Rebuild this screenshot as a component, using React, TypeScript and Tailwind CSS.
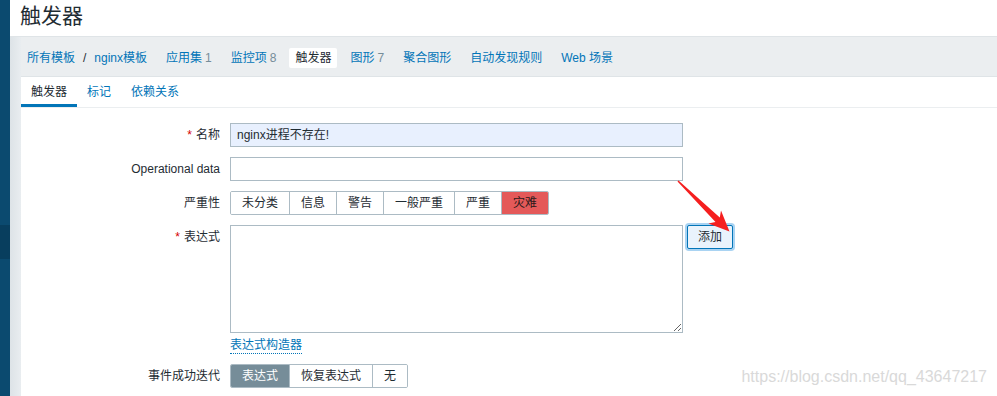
import React from "react";

const FONT = "font-['Liberation_Sans','Noto_Sans_CJK_SC',sans-serif]";

function NavLink({ text, count, active }: { text: string; count?: string; active?: boolean }) {
  return (
    <span
      className={
        "px-[6px] h-[20px] flex items-center whitespace-nowrap " +
        (active ? "bg-white text-[#1f2c33] rounded-[2px]" : "text-[#0275b8]")
      }
    >
      {text}
      {count && <span className="text-[#768d99] ml-[3px]">{count}</span>}
    </span>
  );
}

function Label({ text, req }: { text: string; req?: boolean }) {
  return (
    <div className="w-[209px] shrink-0 pr-[10px] text-right leading-[24px] text-[#1f2c33]">
      {req && <span className="text-[#d40000] mr-[4px]">*</span>}
      {text}
    </div>
  );
}

function Seg({
  items,
  selected,
  selClass,
}: {
  items: string[];
  selected: number;
  selClass: string;
}) {
  return (
    <div className="flex h-[24px] border border-[#acbbc4] rounded-[2px] overflow-hidden">
      {items.map((t, i) => (
        <span
          key={t}
          className={
            "px-[11px] flex items-center whitespace-nowrap " +
            (i > 0 ? "border-l border-[#acbbc4] " : "") +
            (i === selected ? selClass : "bg-white text-[#1f2c33]")
          }
        >
          {t}
        </span>
      ))}
    </div>
  );
}

export default function App() {
  return (
    <div className={"relative w-[997px] h-[396px] overflow-hidden flex text-[12px] " + FONT}>
      {/* sidebar */}
      <div className="w-[10px] shrink-0 flex flex-col bg-[#0b4a6f]">
        <div className="h-[225px] bg-[#0b4a6f]" />
        <div className="h-[34px] bg-[#083e5e]" />
        <div className="flex-1 bg-[#0b4a6f]" />
      </div>
      {/* main */}
      <div className="flex-1 flex flex-col min-w-0">
        <div className="h-[37px] shrink-0 bg-white border-b border-[#dfe4e7] pl-[10px] pt-[4px]">
          <div className="text-[21px] leading-[24px] text-[#1f2c33]">触发器</div>
        </div>
        <div className="flex-1 flex bg-[#ebeef0]">
          <div className="w-[11px] shrink-0 bg-gradient-to-r from-[#dde3e7] to-[#e9edf0]" />
          <div className="flex-1 flex flex-col min-w-0">
            {/* nav */}
            <div className="h-[40px] shrink-0 flex items-center pt-[3px] gap-[7px] border-b border-[#dfe4e7]">
              <div className="flex items-center">
                <NavLink text="所有模板" />
                <span className="text-[#1f2c33] px-[2px]">/</span>
                <NavLink text="nginx模板" />
              </div>
              <NavLink text="应用集" count="1" />
              <NavLink text="监控项" count="8" />
              <NavLink text="触发器" active />
              <NavLink text="图形" count="7" />
              <NavLink text="聚合图形" />
              <NavLink text="自动发现规则" />
              <NavLink text="Web 场景" />
            </div>
            {/* card */}
            <div className="flex-1 bg-white flex flex-col">
              <div className="h-[31px] shrink-0 flex border-b border-[#ebeef0]">
                <div className="px-[10px] flex items-center border-b-[3px] border-[#0275b8] pt-[3px] text-[#1f2c33]">
                  触发器
                </div>
                <div className="px-[10px] flex items-center text-[#0275b8]">标记</div>
                <div className="px-[10px] flex items-center text-[#0275b8]">依赖关系</div>
              </div>
              <div className="pt-[15px] flex flex-col gap-[10px]">
                <div className="flex">
                  <Label text="名称" req />
                  <div className="w-[453px] h-[24px] border border-[#acbbc4] bg-[#e8f0fe] px-[6px] flex items-center text-[#1f2c33]">
                    nginx进程不存在!
                  </div>
                </div>
                <div className="flex">
                  <Label text="Operational data" />
                  <div className="w-[453px] h-[24px] border border-[#acbbc4] bg-white" />
                </div>
                <div className="flex">
                  <Label text="严重性" />
                  <Seg
                    items={["未分类", "信息", "警告", "一般严重", "严重", "灾难"]}
                    selected={5}
                    selClass="bg-[#e45959] text-[#2a1a1a]"
                  />
                </div>
                <div className="flex">
                  <Label text="表达式" req />
                  <div className="flex flex-col items-start">
                    <textarea
                      className="w-[453px] h-[108px] border border-[#acbbc4] bg-white outline-none"
                      defaultValue=""
                    />
                    <span className="mt-[4px] leading-[16px] text-[#0275b8] border-b border-dotted border-[#0275b8]">
                      表达式构造器
                    </span>
                  </div>
                  <div className="ml-[4px]">
                    <button className="h-[24px] px-[10px] border border-[#0275b8] rounded-[2px] bg-[#e9f3fc] text-[#1f2c33] ring-2 ring-[#a9d3f2] leading-[20px]">
                      添加
                    </button>
                  </div>
                </div>
                <div className="flex">
                  <Label text="事件成功迭代" />
                  <Seg
                    items={["表达式", "恢复表达式", "无"]}
                    selected={0}
                    selClass="bg-[#768d99] text-white"
                  />
                </div>
              </div>
            </div>
          </div>
        </div>
      </div>

      {/* annotation arrow */}
      <svg className="absolute left-0 top-0 pointer-events-none" width="997" height="396">
        <polygon
          points="678.5,180.5 719.8,217.6 721.0,210.6 729.5,231.5 708.4,223.4 715.5,222.0 677.5,181.5"
          fill="#f51f1f"
        />
      </svg>

      {/* watermark */}
      <div className="absolute right-[10px] top-[366px] text-[16px] leading-[22px] text-[#d9d9d9] font-['Liberation_Sans',sans-serif] pointer-events-none">
        https://blog.csdn.net/qq_43647217
      </div>
    </div>
  );
}
